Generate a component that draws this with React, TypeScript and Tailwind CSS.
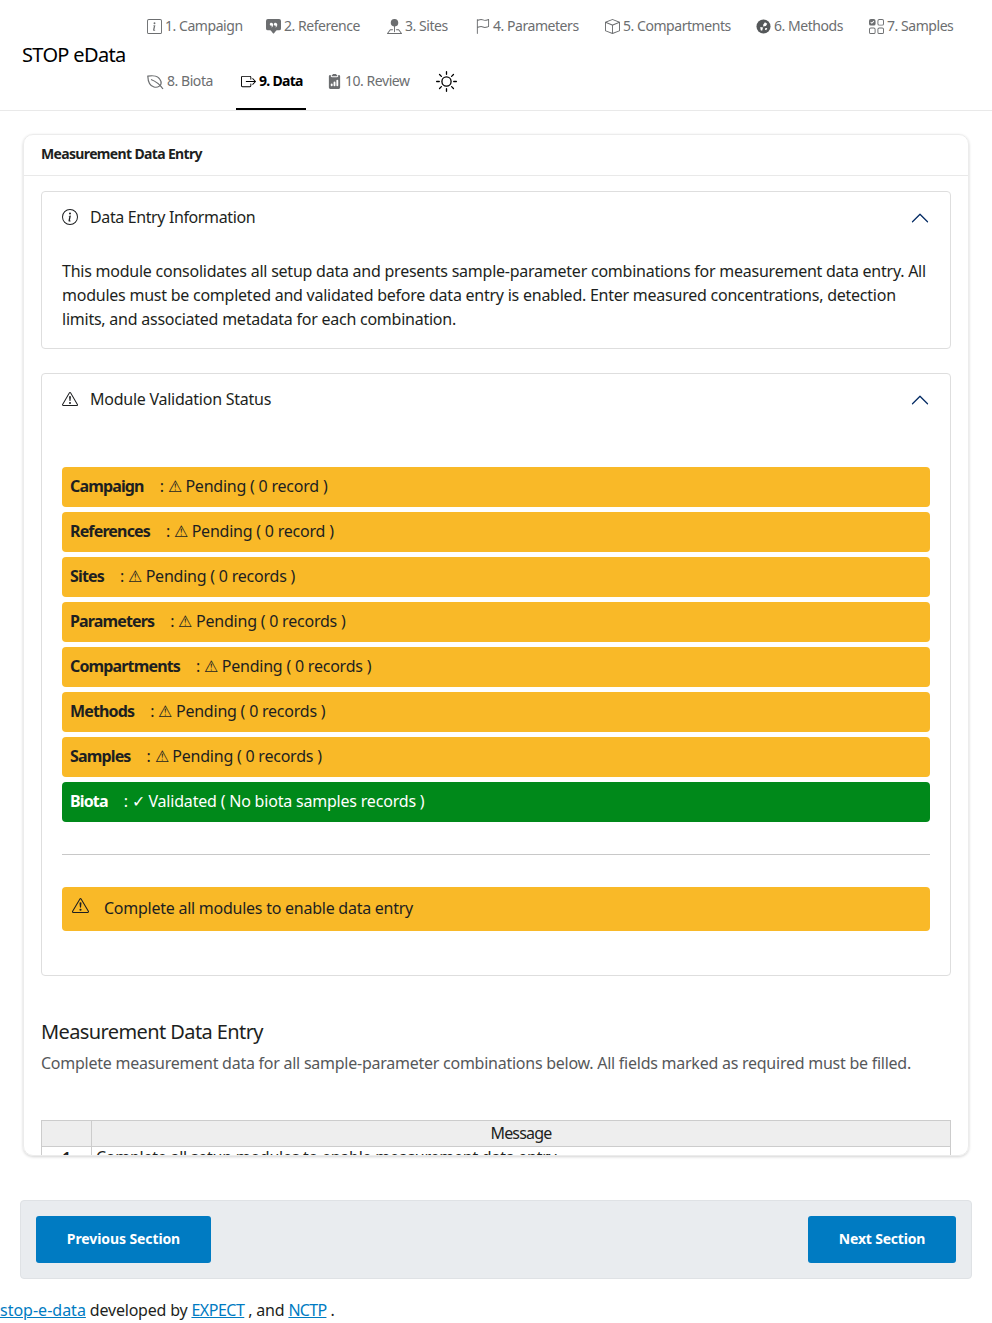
import {
  BsInfoSquare,
  BsChatSquareQuoteFill,
  BsPinMapFill,
  BsFlag,
  BsBox,
  BsUiChecksGrid,
  BsBoxArrowRight,
  BsClipboard2DataFill,
  BsSun,
  BsInfoCircle,
  BsExclamationTriangle,
  BsChevronUp,
} from "react-icons/bs";

function LeafIcon({ size, className }: { size?: number; className?: string }) {
  return (
    <svg width={size} height={size} viewBox="0 0 17 17" fill="none" stroke="currentColor" strokeWidth="1.2" className={className}>
      <path d="M0.8 3.2C6 2 12 3 14 8.5C15 12.5 11 15 7 14C3 13 1 8 0.8 3.2Z" />
      <path d="M4 6.5C8 8 12.5 11 16 16" />
    </svg>
  );
}

function MethodsIcon({ size, className }: { size?: number; className?: string }) {
  return (
    <svg width={size} height={size} viewBox="0 0 16 16" className={className}>
      <circle cx="8" cy="8" r="7.5" fill="#55585a" />
      <path d="M9.5 3.5L12 5L10.5 7.5L7.5 8L8 5.5Z" fill="#fff" />
      <path d="M4.5 8.5L7.5 9L6.5 12.5L5 12Z" fill="#fff" />
      <path d="M10 9.5L12 9.5L11 12L9.5 11.5Z" fill="#fff" />
    </svg>
  );
}

const navItems = [
  { label: "1. Campaign", Icon: BsInfoSquare, width: "w-[103px]" },
  { label: "2. Reference", Icon: BsChatSquareQuoteFill, width: "w-[105px]" },
  { label: "3. Sites", Icon: BsPinMapFill, width: "w-[72px]" },
  { label: "4. Parameters", Icon: BsFlag, width: "w-[114px]" },
  { label: "5. Compartments", Icon: BsBox, width: "w-[135px]" },
  { label: "6. Methods", Icon: MethodsIcon, width: "w-[97px]" },
  { label: "7. Samples", Icon: BsUiChecksGrid, width: "w-[96px]" },
];

const modules = [
  { name: "Campaign", text: "Pending ( 0 record )" },
  { name: "References", text: "Pending ( 0 record )" },
  { name: "Sites", text: "Pending ( 0 records )" },
  { name: "Parameters", text: "Pending ( 0 records )" },
  { name: "Compartments", text: "Pending ( 0 records )" },
  { name: "Methods", text: "Pending ( 0 records )" },
  { name: "Samples", text: "Pending ( 0 records )" },
];

function NavLink({ label, Icon, width, active, iconSize = 15, iconClass = "" }: { label: string; Icon: React.ElementType; width: string; active?: boolean; iconSize?: number; iconClass?: string }) {
  return (
    <a
      className={`flex h-[55px] items-center px-[5px] whitespace-nowrap text-sm ${width} ${
        active ? "border-b-2 border-black pb-[1px] font-bold tracking-[-0.7px] text-black" : "pb-[3px] tracking-[-0.45px] text-[#6c6e70]"
      }`}
    >
      <Icon size={iconSize} className={`mr-[3px] shrink-0 ${iconClass}`} />
      {label}
    </a>
  );
}

function StatusRow({ name, text }: { name: string; text: string }) {
  return (
    <div className="flex h-10 items-center rounded bg-[#f9b928] px-2 pb-[2px] tracking-[-0.22px] text-[#1d1f21]">
      <strong className="mr-4 font-bold tracking-[-0.85px]">{name}</strong>
      <span className="whitespace-pre">: ⚠ {text}</span>
    </div>
  );
}

export default function App() {
  return (
    <div className="min-h-[1323px] bg-white font-['Noto_Sans',sans-serif] text-base text-[#1d1f21]">
      <header className="flex h-[111px] items-center border-b border-[#e9e9e9] pl-[22px]">
        <span className="w-[120px] text-xl tracking-[-0.65px] text-black">STOP eData</span>
        <nav className="flex flex-1 flex-wrap gap-x-4">
          {navItems.map((item) => (
            <NavLink key={item.label} {...item} />
          ))}
          <NavLink label="8. Biota" Icon={LeafIcon} width="w-[78px]" iconSize={17} iconClass="text-[#6c6e70]" />
          <NavLink label="9. Data" Icon={BsBoxArrowRight} width="w-[70px]" active />
          <NavLink label="10. Review" Icon={BsClipboard2DataFill} width="w-[93px]" />
          <a className="flex h-[55px] items-center px-[5px] pb-[3px] text-black">
            <BsSun size={21} />
          </a>
        </nav>
      </header>

      <main className="px-[23px] pt-[23px]">
        <section className="h-[1022px] overflow-hidden rounded-[10px] border border-[#ececec] shadow-[0_1px_3px_rgba(0,0,0,0.18)]">
          <div className="flex h-[41px] items-center border-b border-[#e9e9e9] px-[17px] pb-[2px] text-sm font-bold tracking-[-0.65px]">
            Measurement Data Entry
          </div>
          <div className="px-[17px] pt-[15px]">
            <div className="h-[158px] rounded border border-[#dedede]">
              <div className="flex h-[50px] items-center justify-between px-5">
                <div className="flex items-center tracking-[-0.38px]">
                  <BsInfoCircle size={16} className="mr-3" />
                  Data Entry Information
                </div>
                <BsChevronUp size={20} className="mt-[2px] text-[#052c65]" />
              </div>
              <p className="px-5 pt-[17px] leading-6 tracking-[-0.24px]">
                This module consolidates all setup data and presents sample-parameter combinations for measurement data entry. All modules must be completed and validated before data entry is enabled. Enter measured concentrations, detection limits, and associated metadata for each combination.
              </p>
            </div>

            <div className="mt-6 h-[603px] rounded border border-[#dedede]">
              <div className="flex h-[50px] items-center justify-between px-5">
                <div className="flex items-center tracking-[-0.25px]">
                  <BsExclamationTriangle size={16} className="mr-3" />
                  Module Validation Status
                </div>
                <BsChevronUp size={20} className="mt-[2px] text-[#052c65]" />
              </div>
              <div className="flex flex-col gap-[5px] px-5 pt-[43px]">
                {modules.map((m) => (
                  <StatusRow key={m.name} {...m} />
                ))}
                <div className="flex h-10 items-center rounded bg-[#00891a] px-2 pb-[2px] tracking-[-0.2px] text-white">
                  <strong className="mr-4 font-bold tracking-[-0.85px]">Biota</strong>
                  <span className="whitespace-pre">: ✓ Validated ( No biota samples records )</span>
                </div>
              </div>
              <div className="mx-5 mt-8 border-t border-[#c8c8c8]" />
              <div className="mx-5 mt-8 flex h-11 items-center rounded bg-[#f9b928] pb-[2px] pl-[10px] tracking-[-0.25px]">
                <BsExclamationTriangle size={17} className="mr-[15px] -mt-[5px] shrink-0" />
                Complete all modules to enable data entry
              </div>
            </div>

            <h2 className="mt-[44px] text-xl leading-6 tracking-[-0.6px]">Measurement Data Entry</h2>
            <p className="mt-[7px] leading-6 tracking-[-0.25px] text-[#56585a]">
              Complete measurement data for all sample-parameter combinations below. All fields marked as required must be filled.
            </p>

            <table className="mt-[45px] w-full table-fixed border-collapse border border-[#ccc] text-center">
              <thead>
                <tr className="h-[26px] bg-[#eeeeee] tracking-[-0.8px]">
                  <th className="w-[50px] border border-[#ccc] font-normal"></th>
                  <th className="border border-[#ccc] pb-[2px] leading-[22px] font-normal">Message</th>
                </tr>
              </thead>
              <tbody>
                <tr>
                  <td className="border border-[#ccc] text-sm leading-5 font-bold">1</td>
                  <td className="border border-[#ccc] px-1 text-left leading-5 tracking-[-0.25px]">
                    Complete all setup modules to enable measurement data entry
                  </td>
                </tr>
              </tbody>
            </table>
          </div>
        </section>

        <div className="-mx-[3px] mt-[44px] flex h-[79px] items-center justify-between rounded border border-[#dfe2e5] bg-[#e9ecef] px-[15px]">
          <button className="h-[47px] w-[175px] rounded-[3px] bg-[#007bc2] pb-[2px] text-sm font-bold tracking-[-0.1px] text-white">
            Previous Section
          </button>
          <button className="h-[47px] w-[148px] rounded-[3px] bg-[#007bc2] pb-[2px] text-sm font-bold tracking-[-0.2px] text-white">
            Next Section
          </button>
        </div>
      </main>

      <footer className="mt-[19px] leading-6 tracking-[-0.2px]">
        <a className="tracking-[0px] text-[#007bc2] underline">stop-e-data</a> developed by{" "}
        <a className="tracking-[-0.5px] text-[#007bc2] underline">EXPECT</a> , and{" "}
        <a className="tracking-[-0.7px] text-[#007bc2] underline">NCTP</a> .
      </footer>
    </div>
  );
}
